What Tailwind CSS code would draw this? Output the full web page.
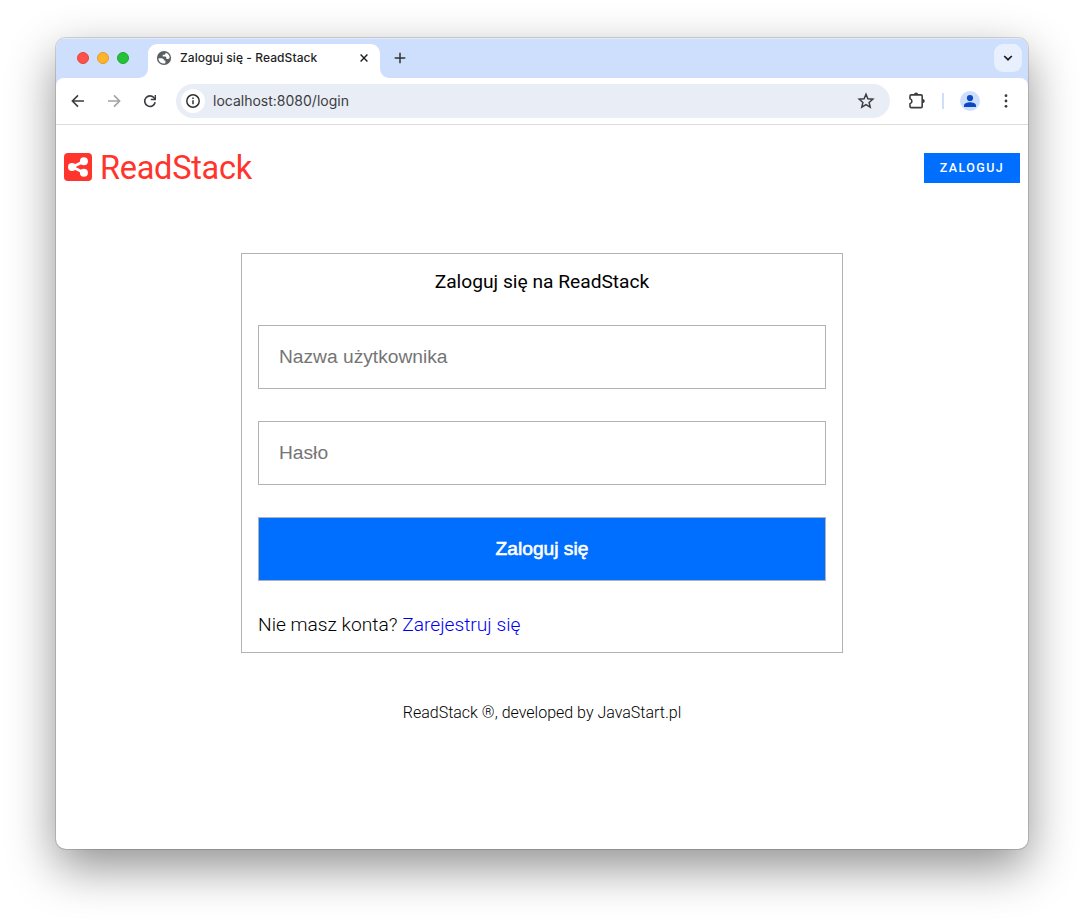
<!DOCTYPE html>
<html lang="pl">
<head>
<meta charset="utf-8">
<title>Zaloguj się - ReadStack</title>
<script src="https://cdn.jsdelivr.net/npm/@tailwindcss/browser@4"></script>
</head>
<body class="bg-white w-[1084px] h-[923px] overflow-hidden pt-[38px] pl-[56px]">
<div class="w-[972px] h-[811px] rounded-[10px] overflow-hidden bg-white flex flex-col shadow-[0_0_0_1px_rgba(0,0,0,0.14),0_18px_48px_rgba(0,0,0,0.44)]">
  <div class="bg-[#cedffe] flex flex-col font-['Inter',sans-serif]">
    <div class="h-10 flex items-center border-t border-[#e0eafd] pb-px">
      <div class="flex gap-2 pl-[21px] w-[82px] shrink-0">
        <span class="size-3 shrink-0 rounded-full bg-[#ff5049] border border-[#e2463f]"></span>
        <span class="size-3 shrink-0 rounded-full bg-[#feb429] border border-[#e09e28]"></span>
        <span class="size-3 shrink-0 rounded-full bg-[#25c138] border border-[#1dab2e]"></span>
      </div>
      <div class="relative w-[252px] h-full flex items-center pl-[18px] shrink-0">
        <svg class="absolute left-0 top-[5px]" width="252" height="34" viewBox="0 0 252 34"><path fill="#fff" d="M0 34c6 0 10-4 10-10V10C10 4 14 0 20 0h212c6 0 10 4 10 10v14c0 6 4 10 10 10z"/></svg>
        <svg class="relative shrink-0" width="16" height="16" viewBox="0 0 16 16"><circle cx="8" cy="8" r="7.100" fill="#5a5d62"/><path fill="#fff" d="M2.400 8.300h3c1.700 0 2.700.9 2.700 2.300h1.300v2.700c-3.700 1-7-1.400-7-5zM9.600 2.700v.6c0 .9-.7 1.500-1.600 1.500H6.700v1.800h2.200c.9 0 1.500.7 1.500 1.500v.9h1.300c.8 0 1.400-.3 1.900-.8.400-2.700-1.400-4.900-4-5.500z"/></svg>
        <span class="relative text-[12px] tracking-[0.08px] font-medium text-[#1f1f1f] ml-2 w-[180px] whitespace-nowrap">Zaloguj się - ReadStack</span>
        <svg class="relative shrink-0" width="8" height="8" viewBox="0 0 8 8"><path d="M.6.6l6.800 6.800M7.400.6L.6 7.400" stroke="#1f1f1f" stroke-width="1.400"/></svg>
      </div>
      <svg class="ml-[4px]" width="12" height="12" viewBox="0 0 12 12"><path d="M6 .7v10.600M.7 6h10.600" stroke="#303134" stroke-width="1.500"/></svg>
      <div class="ml-auto mr-[6px] size-7 rounded-[9px] bg-[#e8effd] flex items-center justify-center">
        <svg width="10" height="6" viewBox="0 0 10 6"><path d="M1.200 1L5 4.700 8.800 1" fill="none" stroke="#1f1f1f" stroke-width="1.700"/></svg>
      </div>
    </div>
    <div class="h-[47px] bg-white rounded-t-[8px] border-b border-[#dcdcdc] flex items-center">
      <svg class="ml-[14px]" width="16" height="16" viewBox="0 0 16 16"><path d="M14 8H2.800M8 2.400L2.400 8 8 13.600" fill="none" stroke="#3c3d40" stroke-width="1.600"/></svg>
      <svg class="ml-[20px]" width="16" height="16" viewBox="0 0 16 16"><path d="M2 8h11.200M8 2.400L13.600 8 8 13.600" fill="none" stroke="#a2a2a4" stroke-width="1.600"/></svg>
      <svg class="ml-[20px]" width="16" height="16" viewBox="0 0 16 16"><path d="M13.200 9.300A5.300 5.300 0 1 1 12.300 5" fill="none" stroke="#3c3d40" stroke-width="1.600"/><path d="M12.600 2H14v5.200H8.800V5.800h2.400l1.400-1.300z" fill="#3c3d40"/></svg>
      <div class="ml-[18px] w-[714px] h-[34px] rounded-full bg-[#e9edf6] flex items-center pl-[5px] pr-[15px]">
        <div class="size-6 rounded-full bg-white flex items-center justify-center"><svg width="16" height="16" viewBox="0 0 16 16"><circle cx="8" cy="8" r="6.200" fill="none" stroke="#303134" stroke-width="1.500"/><path d="M8 7.200v4M8 4.600v1.500" stroke="#303134" stroke-width="1.500"/></svg></div>
        <span class="ml-[8px] pb-[2px] text-[14px] text-[#3c3d40]">localhost:8080/login</span>
        <svg class="ml-auto" width="18" height="18" viewBox="0 0 18 18"><path d="M9 2.300l1.900 4.500 4.900.4-3.700 3.200 1.100 4.700L9 12.600l-4.200 2.500 1.100-4.700-3.700-3.200 4.900-.4z" fill="none" stroke="#3c3d40" stroke-width="1.500"/></svg>
      </div>
      <svg class="ml-[17px]" width="20" height="20" viewBox="0 0 20 20"><path d="M4 3.700h9.800q1.200 0 1.200 1.200v10.300q0 1.200-1.200 1.200H4q-1.200 0-1.200-1.200v-2.700c1.200-.3 1.900-1.200 1.900-2.400S4 7.900 2.800 7.600V4.900q0-1.200 1.200-1.200z" transform="translate(.2 .2)" fill="none" stroke="#3c3d40" stroke-width="1.600" stroke-linejoin="round"/><path d="M7 3.500a2.100 2.100 0 0 1 4.200 0zM15.700 8a2.100 2.100 0 0 1 0 4.200z" fill="#3c3d40"/></svg>
      <span class="ml-[15px] w-[2px] h-[16px] bg-[#cedffe]"></span>
      <svg class="ml-[16px]" width="20" height="20" viewBox="0 0 20 20"><circle cx="10" cy="10" r="10" fill="#cedffe"/><circle cx="10" cy="7" r="3.100" fill="#0b48c1"/><path d="M4 16v-1.600c0-2.200 3.500-3.200 6-3.200s6 1 6 3.200V16z" fill="#0b48c1"/></svg>
      <svg class="ml-[24px]" width="4" height="16" viewBox="0 0 4 16"><g fill="#3c3d40"><circle cx="2" cy="2.700" r="1.400"/><circle cx="2" cy="8" r="1.400"/><circle cx="2" cy="13.300" r="1.400"/></g></svg>
    </div>
  </div>
  <div class="flex-1 flex flex-col font-['Roboto',sans-serif] font-light text-black">
    <header class="flex items-center justify-between px-2 pt-[22px] h-[64px]">
      <div class="flex items-center gap-2 text-[#ff342c]">
        <svg class="mb-[2px]" width="28" height="28" viewBox="0 0 28 28"><rect width="28" height="28" rx="4" fill="#ff342c"/><path d="M20 8.300L8.400 14 20 19.700" fill="none" stroke="#fff" stroke-width="2.700"/><g fill="#fff"><circle cx="19.900" cy="8.200" r="4"/><circle cx="8" cy="14" r="4"/><circle cx="19.900" cy="19.800" r="4"/></g></svg>
        <span class="text-[32.500px] tracking-[-0.28px] leading-[40px] font-normal">ReadStack</span>
      </div>
      <div class="w-[96px] h-[30px] bg-[#006eff] text-white text-[12.500px] font-medium tracking-[1.400px] flex items-center justify-center">ZALOGUJ</div>
    </header>
    <main class="mt-[64px] mx-auto w-[602px] h-[400px] border border-[#b2b2b2] px-4 flex flex-col">
      <h1 class="mt-4 h-[24px] text-center text-[19.200px] leading-[24px] font-normal">Zaloguj się na ReadStack</h1>
      <div class="mt-[31px] h-[64px] border border-[#b2b2b2] px-5 flex items-center font-['Liberation_Sans',sans-serif] font-normal text-[19.200px] text-[#757575]">Nazwa użytkownika</div>
      <div class="mt-8 h-[64px] border border-[#b2b2b2] px-5 flex items-center font-['Liberation_Sans',sans-serif] font-normal text-[19.200px] text-[#757575]">Hasło</div>
      <div class="mt-8 h-[64px] border border-[#b2b2b2] bg-[#006eff] flex items-center justify-center font-['Liberation_Sans',sans-serif] font-normal text-[19.200px] text-white [-webkit-text-stroke:0.6px_white]">Zaloguj się</div>
      <p class="mt-8 text-[19.200px] leading-[24px]">Nie masz konta? <a class="text-[#0000ee]">Zarejestruj się</a></p>
    </main>
    <footer class="mt-[48px] text-center text-[16px] leading-[24px]">ReadStack ®, developed by JavaStart.pl</footer>
  </div>
</div>
</body>
</html>
